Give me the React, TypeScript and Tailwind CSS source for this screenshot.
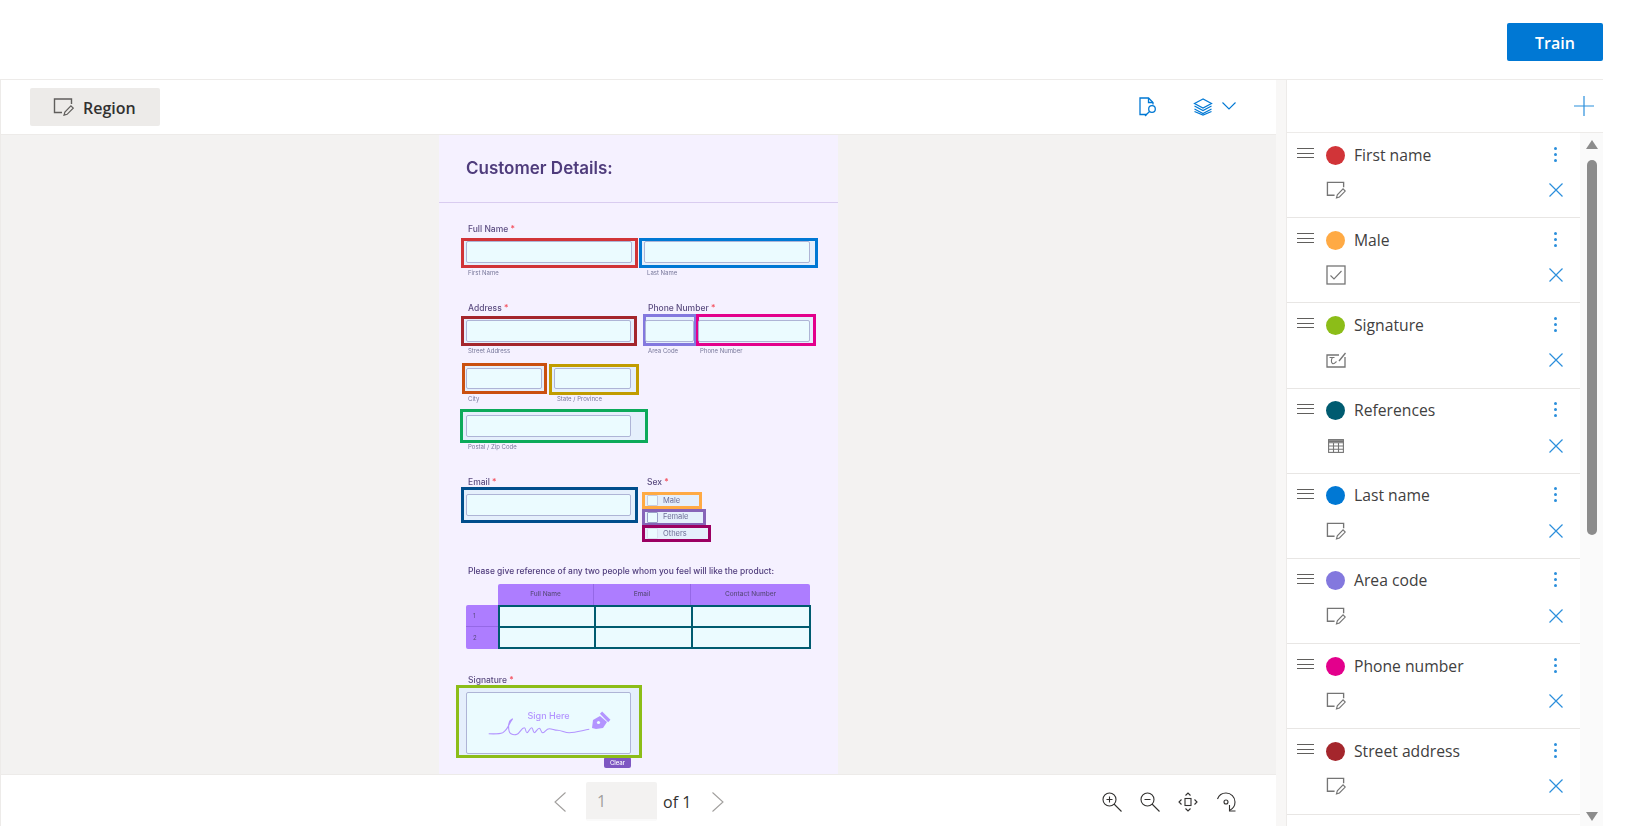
import type { ReactNode } from "react";

const fieldCls = "relative block rounded-[2px] border border-[#aeb4d6] bg-[#ebfbff]";
const regionCls = "absolute border-[3px] bg-[#e5effc]";

function RegionIcon({ className = "" }: { className?: string }) {
    return (
        <svg viewBox="0 0 21 18" className={className} fill="none" stroke="currentColor">
            <path d="M18.5 6V1H1.5v13.5H9" strokeWidth="1.4" />
            <path d="M11 17.2l.9-3.2 6-6.2 2.3 2.3-6.1 6.2z" strokeWidth="1.2" />
        </svg>
    );
}

function CheckIcon({ className = "" }: { className?: string }) {
    return (
        <svg viewBox="0 0 20 20" className={className} fill="none" stroke="currentColor" strokeWidth="1.3">
            <rect x="1" y="1" width="18" height="18" />
            <path d="M4.5 10.5l3.5 3.5 7.5-8" strokeWidth="1.1" />
        </svg>
    );
}

function SignatureIcon({ className = "" }: { className?: string }) {
    return (
        <svg viewBox="0 0 20 16" className={className} fill="none" stroke="currentColor" strokeWidth="1.3">
            <path d="M13 3H1v12h18V5" />
            <path d="M3.5 5.5h5M6.5 5.5c-1.5 2-1.5 5 0 6s3-1 4-2" strokeWidth="1.1" />
            <path d="M13 9l6.5-8" strokeWidth="1.3" />
        </svg>
    );
}

function TableIcon({ className = "" }: { className?: string }) {
    return (
        <svg viewBox="0 0 16 14" className={className} fill="none" stroke="currentColor" strokeWidth="1.1">
            <rect x="0.6" y="0.6" width="14.8" height="12.8" />
            <path d="M0.6 3.8h14.8M0.6 7h14.8M0.6 10.2h14.8M5.5 3.8v9.6M10.5 3.8v9.6" />
            <path d="M0.6 2.2h14.8" strokeWidth="2" />
        </svg>
    );
}

function FieldTypeIcon({ type }: { type: string }) {
    if (type === "check") return <CheckIcon className="w-[20px] h-[20px] text-[#757575]" />;
    if (type === "sign") return <SignatureIcon className="w-[20px] h-[16px] text-[#757575]" />;
    if (type === "table") return <TableIcon className="w-[16px] h-[14px] ml-[2px] text-[#757575]" />;
    return <RegionIcon className="w-[20px] h-[18px] text-[#757575]" />;
}

// last row only peeks in at the bottom edge, its label is below the fold
const fields = [
    { name: "First name", color: "bg-[#d13438]", type: "region" },
    { name: "Male", color: "bg-[#ffaa44]", type: "check" },
    { name: "Signature", color: "bg-[#8cbd18]", type: "sign" },
    { name: "References", color: "bg-[#005b70]", type: "table" },
    { name: "Last name", color: "bg-[#0078d4]", type: "region" },
    { name: "Area code", color: "bg-[#8378de]", type: "region" },
    { name: "Phone number", color: "bg-[#e3008c]", type: "region" },
    { name: "Street address", color: "bg-[#a4262c]", type: "region" },
    { name: "", color: "bg-[#ca5010]", type: "region" },
];

function FieldRow({ name, color, type }: { name: string; color: string; type: string }) {
    return (
        <div className="h-[85.2px] shrink-0 border-b border-[#e8e6e4] pl-[10px] pr-[17px] pt-[12px]">
            <div className="flex items-center h-[20px]">
                <div className="w-[17px] flex flex-col gap-[3.5px] -mt-[4px]">
                    <div className="h-px bg-[#605e5c]" />
                    <div className="h-px bg-[#605e5c]" />
                    <div className="h-px bg-[#605e5c]" />
                </div>
                <div className={`w-[19px] h-[19px] rounded-full ml-[12px] ${color}`} />
                <span className="ml-[9px] text-[15.7px] leading-[20px] text-[#414040] -mt-[1px]">{name}</span>
                <div className="ml-auto flex flex-col gap-[3px] pr-[6px] -mt-[2px]">
                    <div className="w-[3px] h-[3px] rounded-full bg-[#2b8fdc]" />
                    <div className="w-[3px] h-[3px] rounded-full bg-[#2b8fdc]" />
                    <div className="w-[3px] h-[3px] rounded-full bg-[#2b8fdc]" />
                </div>
            </div>
            <div className="flex items-center justify-between h-[20px] mt-[15px] pl-[29px]">
                <FieldTypeIcon type={type} />
                <svg viewBox="0 0 14 14" className="w-[14px] h-[14px] text-[#2b8fdc]" fill="none" stroke="currentColor" strokeWidth="1.2">
                    <path d="M0.5 0.5l13 13M13.5 0.5l-13 13" />
                </svg>
            </div>
        </div>
    );
}

function Label({ children, required = true }: { children: ReactNode; required?: boolean }) {
    return (
        <div className="h-[10px] text-[8.5px] leading-[10px] font-medium text-[#5b4c80]">
            {children}
            {required && <span className="text-[#f4525f]"> *</span>}
        </div>
    );
}

function Caption({ children, className = "" }: { children: ReactNode; className?: string }) {
    return <div className={`h-[8px] text-[6px] leading-[8px] text-[#77779a] ${className}`}>{children}</div>;
}

function FormPage() {
    return (
        <div className="w-[399px] h-full shrink-0 overflow-hidden bg-[#f5f1ff] blur-[0.3px] font-['Inter',sans-serif]">
            <div className="h-[68px] border-b border-[#d9ccf0] pl-[27px] pt-[23px] text-[17px] leading-[20px] font-semibold text-[#4f3c7c]">
                Customer Details:
            </div>

            <div className="pl-[27px] pt-[21px]">
                <div className="pl-[2px]"><Label>Full Name</Label></div>
                <div className="flex mt-[7px] h-[22px]">
                    <div className={`${fieldCls} w-[166px] h-[22px]`}>
                        <div className={`${regionCls} -left-[6px] -top-[4px] w-[177px] h-[30px] border-[#d13438] -z-0`} />
                        <div className={`${fieldCls} -m-px w-[166px] h-[22px]`} />
                    </div>
                    <div className={`${fieldCls} ml-[12px] w-[166px] h-[22px]`}>
                        <div className={`${regionCls} -left-[6px] -top-[4px] w-[179px] h-[30px] border-[#0078d4]`} />
                        <div className={`${fieldCls} -m-px w-[166px] h-[22px]`} />
                    </div>
                </div>
                <div className="flex mt-[6px] pl-[2px]">
                    <Caption className="w-[179px]">First Name</Caption>
                    <Caption>Last Name</Caption>
                </div>

                <div className="flex mt-[26px] pl-[2px]">
                    <div className="w-[180px]"><Label>Address</Label></div>
                    <Label>Phone Number</Label>
                </div>
                <div className="flex mt-[7px] h-[22px]">
                    <div className={`${fieldCls} w-[165px] h-[22px]`}>
                        <div className={`${regionCls} -left-[6px] -top-[5px] w-[176px] h-[30px] border-[#a4262c]`} />
                        <div className={`${fieldCls} -m-px w-[165px] h-[22px]`} />
                    </div>
                    <div className={`${fieldCls} ml-[14px] w-[49px] h-[22px]`}>
                        <div className={`${regionCls} -left-[3px] -top-[7px] w-[54px] h-[32px] border-[#8378de]`} />
                        <div className={`${fieldCls} -m-px w-[49px] h-[22px]`} />
                    </div>
                    <div className={`${fieldCls} ml-[4px] w-[112px] h-[22px]`}>
                        <div className={`${regionCls} -left-[3px] -top-[7px] w-[120px] h-[32px] border-[#e3008c]`} />
                        <div className={`${fieldCls} -m-px w-[112px] h-[22px]`} />
                    </div>
                </div>
                <div className="flex mt-[5px] pl-[2px]">
                    <Caption className="w-[180px]">Street Address</Caption>
                    <Caption className="w-[52px]">Area Code</Caption>
                    <Caption>Phone Number</Caption>
                </div>

                <div className="flex mt-[13px] h-[21px]">
                    <div className={`${fieldCls} w-[76px] h-[21px]`}>
                        <div className={`${regionCls} -left-[5px] -top-[6px] w-[85px] h-[31px] border-[#ca5010]`} />
                        <div className={`${fieldCls} -m-px w-[76px] h-[21px]`} />
                    </div>
                    <div className={`${fieldCls} ml-[12px] w-[77px] h-[21px]`}>
                        <div className={`${regionCls} -left-[6px] -top-[5px] w-[90px] h-[31px] border-[#c19c00]`} />
                        <div className={`${fieldCls} -m-px w-[77px] h-[21px]`} />
                    </div>
                </div>
                <div className="flex mt-[6px] pl-[2px]">
                    <Caption className="w-[89px]">City</Caption>
                    <Caption>State / Province</Caption>
                </div>

                <div className={`${fieldCls} mt-[12px] w-[165px] h-[22px]`}>
                    <div className={`${regionCls} -left-[7px] -top-[7px] w-[188px] h-[34px] border-[#0caa5a]`} />
                    <div className={`${fieldCls} -m-px w-[165px] h-[22px]`} />
                </div>
                <Caption className="mt-[6px] pl-[2px]">Postal / Zip Code</Caption>

                <div className="flex mt-[26px] h-[65px]">
                    <div className="w-[181px] pl-[2px]">
                        <Label>Email</Label>
                        <div className={`${fieldCls} -ml-[2px] mt-[7px] w-[165px] h-[22px]`}>
                            <div className={`${regionCls} -left-[6px] -top-[8px] w-[177px] h-[36px] border-[#004e8c]`} />
                            <div className={`${fieldCls} -m-px w-[165px] h-[22px]`} />
                        </div>
                    </div>
                    <div>
                        <Label>Sex</Label>
                        <div className="mt-[5px] -ml-[5px]">
                            <div className="relative h-[17px] -mb-[0.5px] flex items-center pl-[2px] w-[60px] border-[3px] bg-[#e5effc] border-[#ffaa44]">
                                <div className="w-[11px] h-[11px] rounded-[1px] border border-[#c5cbe3] bg-[#ebfbff]" />
                                <span className="ml-[5px] text-[7.5px] text-[#6d6d96]">Male</span>
                            </div>
                            <div className="relative h-[17px] -mb-[0.5px] flex items-center pl-[2px] w-[64px] border-[3px] bg-[#e5effc] border-[#8764b8]">
                                <div className="w-[11px] h-[11px] rounded-[1px] border border-[#9aa0c8] bg-[#ebfbff]" />
                                <span className="ml-[5px] text-[7.5px] text-[#6d6d96]">Female</span>
                            </div>
                            <div className="relative h-[17px] -mb-[0.5px] flex items-center pl-[2px] w-[69px] border-[3px] bg-[#e5effc] border-[#9b0062]">
                                <div className="w-[11px] h-[11px] rounded-[1px] border border-[#dbe0f0] bg-[#ebfbff]" />
                                <span className="ml-[5px] text-[7.5px] text-[#6d6d96]">Others</span>
                            </div>
                        </div>
                    </div>
                </div>

                <div className="mt-[24px] pl-[2px] h-[10px] text-[8.45px] leading-[10px] font-medium text-[#4f3c7c] whitespace-nowrap">
                    Please give reference of any two people whom you feel will like the product:
                </div>
                <div className="flex mt-[8px]">
                    <div className="w-[32px] pt-[21px]">
                        <div className="h-[22px] rounded-tl-[2px] bg-[#ad7dff] border-b border-[#9568e6] pl-[7px] text-[6px] leading-[21px] text-[#5b4c80]">1</div>
                        <div className="h-[22px] rounded-bl-[2px] bg-[#ad7dff] pl-[7px] text-[6px] leading-[22px] text-[#5b4c80]">2</div>
                    </div>
                    <div className="w-[313px]">
                        <div className="grid grid-cols-[96px_97px_1fr] h-[21px] w-[312px] rounded-t-[2px] bg-[#ad7dff] text-[6.5px] leading-[21px] font-medium text-center text-[#5b4c80]">
                            <div className="border-r border-[#9568e6]">Full Name</div>
                            <div className="border-r border-[#9568e6]">Email</div>
                            <div>Contact Number</div>
                        </div>
                        <div className="grid grid-cols-[94px_95px_1fr] gap-[2px] p-[2px] h-[44px] bg-[#005b70]">
                            <div className="bg-[#ebfbff]" />
                            <div className="bg-[#ebfbff]" />
                            <div className="bg-[#ebfbff]" />
                            <div className="bg-[#ebfbff]" />
                            <div className="bg-[#ebfbff]" />
                            <div className="bg-[#ebfbff]" />
                        </div>
                    </div>
                </div>

                <div className="mt-[26px] pl-[2px]"><Label>Signature</Label></div>
                <div className={`${fieldCls} mt-[7px] w-[165px] h-[62px] border-[#8a90b8]`}>
                    <div className={`${regionCls} -left-[11px] -top-[8px] w-[186px] h-[73px] border-[#8cbd18]`} />
                    <div className={`${fieldCls} -m-px w-[165px] h-[62px] border-[#8a90b8]`}>
                        <div className="absolute left-0 right-0 top-[17px] text-center text-[9px] leading-[12px] font-medium text-[#b394ff]">Sign Here</div>
                        <svg viewBox="0 0 165 62" className="absolute inset-0 w-[165px] h-[62px]" fill="none" stroke="#b394ff" strokeWidth="1.1">
                            <path d="M21.700 40.700c6 .3 11 .2 14-1 3-1.600 5-5 6.600-8.400 1.500-3 3.400-5.600 3.400-5.600s-3.800 2-4 5.600c-.3 4 .5 8.500 2.300 9.400 2 1.200 4.500 1.200 6 .6 3-1.200 4.500-6.600 7.300-6.600 1.800 0 1 5 2.700 5s2.800-5 4.700-5c1.600 0 1 5 2.600 5s3-4.400 5-4.400c1.500 0 1.600 4.400 3.400 4.400 2 0 3.500-4 6.600-4 3 0 5 1.600 8.400 1.600 4 .3 7.600 2.400 11.600 2.400 6.500 0 13.500-2.400 20-3.400" />
                            <path d="M125 35l1-8 7-4 7 6-4 6-7 1z" fill="#b394ff" stroke="none" />
                            <circle cx="131.500" cy="29.500" r="1.600" fill="#ebfbff" stroke="none" />
                            <path d="M134 19.700l8.300 8.300" strokeWidth="3.200" />
                        </svg>
                    </div>
                </div>
                <div className="ml-[138px] mt-[3px] w-[27px] h-[11px] rounded-[2px] bg-[#7e57c2] text-center text-[6px] leading-[11px] font-medium text-white">Clear</div>
            </div>
        </div>
    );
}

export default function App() {
    return (
        <div className="w-[1627px] h-[826px] overflow-hidden bg-white pr-[24px] font-['Open_Sans',sans-serif]">
            <div className="h-[80px] border-b border-[#edebe9] flex justify-end items-start pt-[23px]">
                <button className="w-[96px] h-[38px] rounded-[2px] bg-[#0078d4] text-white text-[16px] leading-[40px] font-semibold">Train</button>
            </div>

            <div className="flex h-[746px]">
                <div className="w-[1276px] flex flex-col border-l border-[#edebe9]">
                    <div className="h-[55px] border-b border-[#edebe9] flex items-center pl-[29px] pr-[40px] shrink-0">
                        <button className="w-[130px] h-[38px] rounded-[2px] bg-[#edebe9] flex items-center pl-[23px]">
                            <RegionIcon className="w-[21px] h-[18px] text-[#605e5c]" />
                            <span className="ml-[9px] mt-[1px] text-[16px] font-semibold text-[#323130]">Region</span>
                        </button>
                        <svg viewBox="0 0 18 20" className="ml-auto w-[18px] h-[20px] -mt-[1px] text-[#0078d4]" fill="none" stroke="currentColor" strokeWidth="1.3">
                            <path d="M8 17.500H1V1h8.500L14 5.500v2" />
                            <path d="M9.500 1v4.500H14" />
                            <circle cx="13" cy="12" r="3.300" />
                            <path d="M10.500 14.500l-4.500 4.500" />
                        </svg>
                        <svg viewBox="0 0 20 18" className="ml-[36px] w-[20px] h-[18px] -mt-[1px] text-[#0078d4]" fill="none" stroke="currentColor" strokeWidth="1.2">
                            <path d="M10 1L1.500 5.500 10 10l8.500-4.500z" />
                            <path d="M1.500 8L10 12.500 18.500 8M1.500 11L10 15.500l8.500-4.500" />
                            <path d="M1.500 13.500L10 17l8.500-3.500" />
                        </svg>
                        <svg viewBox="0 0 14 8" className="ml-[9px] w-[14px] h-[8px] -mt-[3px] text-[#0078d4]" fill="none" stroke="currentColor" strokeWidth="1.1">
                            <path d="M0.500 0.500L7 7l6.500-6.500" />
                        </svg>
                    </div>

                    <div className="flex-1 min-h-0 bg-[#f3f2f1] flex pl-[438px]">
                        <FormPage />
                    </div>

                    <div className="h-[52px] shrink-0 border-t border-[#edebe9] flex items-start pt-[7px] pl-[553px] pr-[40px] text-[#323130]">
                        <svg viewBox="0 0 12 20" className="w-[12px] h-[20px] mt-[10px] text-[#a19f9d]" fill="none" stroke="currentColor" strokeWidth="1.1">
                            <path d="M11.500 0.500L1 10l10.500 9.500" />
                        </svg>
                        <div className="ml-[20px] w-[71px] h-[39px] rounded-[2px] bg-[#f3f2f1] border-b-2 border-[#fafafa] pl-[11px] text-[16px] leading-[38px] text-[#a19f9d]">1</div>
                        <span className="ml-[6px] text-[16px] leading-[40px]">of 1</span>
                        <svg viewBox="0 0 12 20" className="ml-[21px] w-[12px] h-[20px] mt-[10px] text-[#a19f9d]" fill="none" stroke="currentColor" strokeWidth="1.1">
                            <path d="M0.500 0.500L11 10 0.500 19.500" />
                        </svg>
                        <div className="ml-auto flex mt-[10px] gap-[18px] text-[#323130]">
                            <svg viewBox="0 0 20 20" className="w-[20px] h-[20px]" fill="none" stroke="currentColor" strokeWidth="1.1">
                                <circle cx="7.500" cy="7.500" r="6.500" />
                                <path d="M12 12l7.500 7.500M7.500 4.500v6M4.500 7.500h6" />
                            </svg>
                            <svg viewBox="0 0 20 20" className="w-[20px] h-[20px]" fill="none" stroke="currentColor" strokeWidth="1.1">
                                <circle cx="7.500" cy="7.500" r="6.500" />
                                <path d="M12 12l7.500 7.500M4.500 7.500h6" />
                            </svg>
                            <svg viewBox="0 0 20 20" className="w-[20px] h-[20px]" fill="none" stroke="currentColor" strokeWidth="1.1">
                                <rect x="7" y="6.500" width="6" height="7" />
                                <path d="M7.500 3.500L10 1l2.500 2.500M7.500 16.500L10 19l2.500-2.500M3.500 7.500L1 10l2.500 2.500M16.500 7.500L19 10l-2.500 2.500" />
                            </svg>
                            <svg viewBox="0 0 20 20" className="w-[20px] h-[20px]" fill="none" stroke="currentColor" strokeWidth="1.1">
                                <path d="M1.500 7C3 3 6.500 1 10 1c5 0 9 4 9 9 0 4-2.500 7-5.500 8.500" />
                                <circle cx="10" cy="10" r="2" />
                                <path d="M13.500 13v6h6" />
                            </svg>
                        </div>
                    </div>
                </div>

                <div className="w-[11px] shrink-0 bg-[#f8f7f6] border-r border-[#edebe9]" />

                <div className="flex-1 min-w-0 flex flex-col">
                    <div className="h-[53px] shrink-0 border-b border-[#edebe9] flex items-center justify-end pr-[9px]">
                        <svg viewBox="0 0 20 20" className="w-[20px] h-[20px] text-[#2b8fdc]" fill="none" stroke="currentColor" strokeWidth="1.2">
                            <path d="M10 0v20M0 10h20" />
                        </svg>
                    </div>
                    <div className="flex-1 min-h-0 flex">
                        <div className="flex-1 min-w-0 overflow-hidden flex flex-col">
                            {fields.map((f, i) => (
                                <FieldRow key={i} {...f} />
                            ))}
                        </div>
                        <div className="w-[23px] shrink-0 bg-[#fafafa] flex flex-col items-center pl-[1px]">
                            <div className="mt-[7px] w-0 h-0 border-x-[6px] border-x-transparent border-b-[9px] border-b-[#8c8c8c]" />
                            <div className="mt-[11px] w-[10px] h-[375px] rounded-full bg-[#8c8c8c]" />
                            <div className="mt-[277px] w-0 h-0 border-x-[6px] border-x-transparent border-t-[9px] border-t-[#8c8c8c]" />
                        </div>
                    </div>
                </div>
            </div>
        </div>
    );
}
